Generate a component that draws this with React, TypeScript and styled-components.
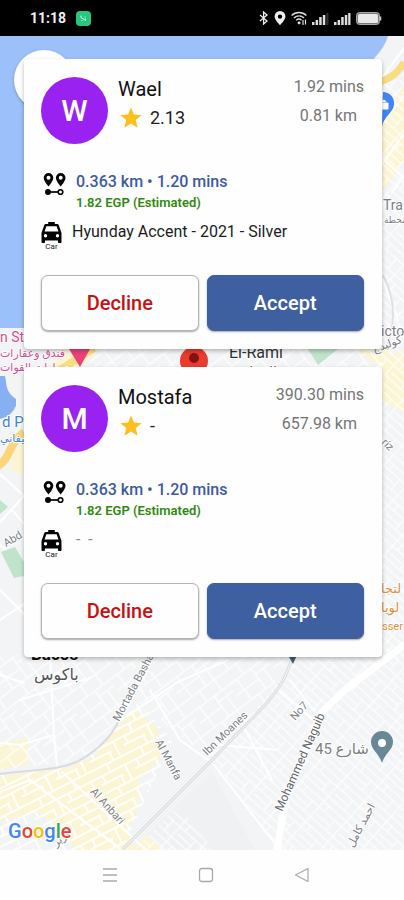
import React from "react";
import styled, { createGlobalStyle } from "styled-components";

const GlobalStyle = createGlobalStyle`
  *, *::before, *::after { box-sizing: border-box; }
  body { margin: 0; background: #fefefe; font-family: Roboto, "Noto Sans", "DejaVu Sans", sans-serif; }
  button { font: inherit; margin: 0; padding: 0; border: 0; background: none; cursor: pointer; }
  h2, p { margin: 0; font: inherit; }
`;

const Screen = styled.div`
  display: flex;
  flex-direction: column;
  min-height: 100vh;
`;

const StatusBar = styled.header`
  display: flex;
  align-items: center;
  height: 36px;
  padding: 0 22px 0 30px;
  background: #000;
  color: #f2f2f2;
`;

const Clock = styled.time`
  font-size: 14px;
  line-height: 20px;
  font-weight: 700;
`;

const AppBadge = styled.span`
  display: flex;
  margin-left: 10px;
`;

const StatusIcons = styled.div`
  display: flex;
  align-items: center;
  gap: 5px;
  margin-left: auto;
`;

const MapArea = styled.main`
  position: relative;
  flex: 1;
  padding: 23px 22px 24px 24px;
  overflow: hidden;
  background: #f2f4f5;
`;

const MapDrawing = styled.svg`
  position: absolute;
  inset: 0;
  width: 100%;
  height: 100%;
`;

const MenuButton = styled.button`
  position: absolute;
  top: 14px;
  left: 14px;
  width: 60px;
  height: 60px;
  border-radius: 50%;
  background: #fff;
  box-shadow: 0 1px 3px rgba(0, 0, 0, 0.25);
`;

const OfferList = styled.div`
  position: relative;
  display: flex;
  flex-direction: column;
  gap: 18px;
`;

const Card = styled.article`
  padding: 18px 18px 18px 17px;
  border-radius: 4px;
  background: #fefefe;
  box-shadow: 0 2px 4px rgba(0, 0, 0, 0.28);
`;

const CardHeader = styled.div`
  display: flex;
  align-items: flex-start;
  gap: 10px;
`;

const Avatar = styled.div`
  display: flex;
  align-items: center;
  justify-content: center;
  flex: none;
  width: 67px;
  height: 67px;
  border-radius: 50%;
  background: #9a22f0;
  color: #fff;
  font-size: 30px;
  font-weight: 500;
`;

const Driver = styled.div`
  display: flex;
  flex-direction: column;
  gap: 5px;
  flex: 1;
`;

const DriverName = styled.h2`
  font-size: 20px;
  line-height: 24px;
  color: #111;
`;

const Rating = styled.div`
  display: flex;
  align-items: center;
  gap: 8px;
  padding-left: 2px;
  font-size: 18px;
  line-height: 24px;
  color: #222;
`;

const Reach = styled.div`
  display: flex;
  flex-direction: column;
  align-items: flex-end;
  gap: 9px;
  font-size: 16px;
  line-height: 20px;
  color: #757575;
`;

const Distance = styled.p`
  padding-right: 7px;
`;

const Trip = styled.div`
  display: flex;
  gap: 9px;
  margin-top: 27px;
  padding-left: 2px;
`;

const TripText = styled.div`
  line-height: 21px;
  font-weight: 500;
`;

const TripLength = styled.p`
  font-size: 16px;
  color: #3c5ba0;
`;

const TripPrice = styled.p`
  font-size: 13px;
  font-weight: 600;
  color: #2f8a0a;
`;

const Vehicle = styled.div`
  display: flex;
  gap: 10px;
  margin-top: 9px;
`;

const VehicleKind = styled.div`
  display: flex;
  flex-direction: column;
  align-items: center;
  width: 21px;
  height: 29px;
  font-size: 8px;
  line-height: 8px;
  color: #222;
`;

const VehicleName = styled.p<{ $unknown: boolean }>`
  padding-left: ${(p) => (p.$unknown ? "4px" : "0")};
  font-size: 16px;
  line-height: 20px;
  color: ${(p) => (p.$unknown ? "#8a8a8a" : "#1c1c1c")};
`;

const Actions = styled.div`
  display: grid;
  grid-template-columns: 1fr 1fr;
  gap: 8px;
  margin-top: 24px;
`;

const ActionButton = styled.button<{ $primary?: boolean }>`
  height: 56px;
  border: 1px solid ${(p) => (p.$primary ? "#3f60a0" : "#b4b4b4")};
  border-radius: 7px;
  background: ${(p) => (p.$primary ? "#3f60a0" : "#fefefe")};
  box-shadow: 0 1px 2px rgba(0, 0, 0, 0.35);
  color: ${(p) => (p.$primary ? "#fff" : "#c51212")};
  font-size: 20px;
  font-weight: 500;
`;

const NavBar = styled.nav`
  display: flex;
  align-items: center;
  justify-content: center;
  gap: 72px;
  height: 50px;
  padding-left: 8px;
  background: #fefefe;
`;

const NavButton = styled.button`
  display: flex;
  align-items: center;
  justify-content: center;
  width: 24px;
  height: 24px;
`;

function PhoneIcons() {
  return (
    <StatusIcons>
      <svg width="10" height="14" viewBox="0 0 10 14" fill="none" stroke="#eee" strokeWidth="1.3">
        <path d="M1 4l7 6-3.4 3V1L8 4l-7 6" />
      </svg>
      <svg width="12" height="14" viewBox="0 0 12 14">
        <path d="M6 0a5.4 5.4 0 0 0-5.4 5.4C.6 9 6 14 6 14s5.4-5 5.4-8.6A5.4 5.4 0 0 0 6 0zm0 3.400a2.200 2.200 0 1 1 0 4.400 2.200 2.200 0 0 1 0-4.400z" fill="#eee" fillRule="evenodd" />
      </svg>
      <svg width="16" height="14" viewBox="0 0 16 14" fill="none" stroke="#ddd" strokeWidth="1.400">
        <path d="M.6 4.500a10.500 10.500 0 0 1 14.800 0M3 7a7 7 0 0 1 10 0M5.300 9.300a3.800 3.800 0 0 1 5.200 0" />
        <path d="M8 10l2 2-2 1.600L6.200 12z" fill="#ddd" stroke="none" />
        <path d="M12 9v5M14.500 8.500v5" strokeWidth="1.200" />
      </svg>
      <svg width="17" height="13" viewBox="0 0 17 13" fill="#ddd">
        <path d="M0 10h2.500v3H0zM3.600 8h2.500v5H3.600zM7.200 5h2.500v8H7.200zM10.800 3h2.500v10h-2.500z" />
        <path d="M14.400 1h2v12h-2z" fill="#333" />
      </svg>
      <svg width="17" height="13" viewBox="0 0 17 13" fill="#ddd">
        <path d="M0 10h2.500v3H0zM3.600 8h2.500v5H3.600zM7.200 5h2.500v8H7.200zM10.800 3h2.500v10h-2.500zM14.200 1h2.300v12h-2.300z" />
      </svg>
      <svg width="26" height="13" viewBox="0 0 26 13">
        <rect x=".5" y=".5" width="23" height="12" rx="3" fill="#777" stroke="#aaa" />
        <rect x="2" y="2" width="20" height="9" rx="1.500" fill="#e8e8e8" />
        <path d="M24.500 4.500v4" stroke="#ccc" strokeWidth="1.500" />
      </svg>
    </StatusIcons>
  );
}

function StarIcon() {
  return (
    <svg width="22" height="22" viewBox="0 0 24 24">
      <path fill="#fcc01a" d="M12 .5l3.200 7.700 8.400.7-6.400 5.400 2 8.200L12 18.100l-7.200 4.400 2-8.200L.4 8.900l8.400-.7z" />
    </svg>
  );
}

function RouteIcon() {
  return (
    <svg width="24" height="25" viewBox="0 0 24 25">
      <path
        fill="#050505"
        fillRule="evenodd"
        d="M5.500 2A4.800 4.800 0 0 0 .7 6.800C.7 10.300 5.500 15.500 5.500 15.500s4.800-5.200 4.800-8.700A4.800 4.800 0 0 0 5.500 2zm0 2.700a2 2 0 1 1 0 4 2 2 0 0 1 0-4zM17.700 2a4.800 4.800 0 0 0-4.800 4.800c0 3.500 4.800 8.700 4.800 8.700s4.800-5.200 4.800-8.700A4.800 4.800 0 0 0 17.700 2zm0 2.700a2 2 0 1 1 0 4 2 2 0 0 1 0-4z"
      />
      <path d="M5 21h10.500" stroke="#050505" strokeWidth="1.700" />
      <circle cx="5" cy="21" r="3" fill="#050505" />
      <circle cx="17.500" cy="21" r="2.300" fill="#fefefe" stroke="#050505" strokeWidth="1.600" />
    </svg>
  );
}

function TaxiIcon() {
  return (
    <svg width="21" height="21" viewBox="0 0 21 21">
      <path
        fill="#050505"
        fillRule="evenodd"
        d="M7.200 0h6.600v2H16c.9 0 1.500.5 1.800 1.300L20.500 11v9c0 .6-.4 1-1 1H18c-.6 0-1-.4-1-1v-1.500H4V20c0 .6-.4 1-1 1H1.500c-.6 0-1-.4-1-1v-9l2.700-7.700C3.500 2.500 4.100 2 5 2h2.200zM5.400 4.200L3.500 9.500h14l-1.900-5.300zM4.500 12a1.700 1.700 0 1 0 0 3.400 1.700 1.700 0 0 0 0-3.400zm12 0a1.700 1.700 0 1 0 0 3.400 1.700 1.700 0 0 0 0-3.400z"
      />
    </svg>
  );
}

function StreetMap() {
  return (
    <MapDrawing viewBox="0 36 404 814" preserveAspectRatio="xMidYMin slice" aria-label="Map">
      <defs>
        <pattern id="blocks" width="46" height="38" patternUnits="userSpaceOnUse" patternTransform="rotate(-37)">
          <path d="M0 1h46M0 14h28M0 26h46M28 8h18M10 1v25M28 1v25M19 26v12M38 8v30" stroke="#fff" strokeOpacity=".8" strokeWidth="1.600" fill="none" />
        </pattern>
        <pattern id="narrow" width="30" height="27" patternUnits="userSpaceOnUse" patternTransform="rotate(42)">
          <path d="M0 1h30M0 8h30M0 15h18M0 21h30M4 0v8M18 8v13M27 0v27" stroke="#fff" strokeOpacity=".75" strokeWidth="1.500" fill="none" />
        </pattern>
        <pattern id="yellowBlocks" width="38" height="26" patternUnits="userSpaceOnUse" patternTransform="rotate(-27)">
          <path d="M0 1h38M0 10h38M0 18h24M14 1v9M30 10v16M5 10v8M22 18v8" stroke="#fff" strokeOpacity=".9" strokeWidth="2" fill="none" />
        </pattern>
      </defs>

      <rect y="36" width="404" height="814" fill="#f2f4f5" />
      <path d="M212 772L255 850H130z" fill="#eff1f3" />

      <g fill="#fcf5d4">
        <path d="M382 118l22-32v75l-22 32zM382 360l22-10v62l-22-10z" />
        <path d="M0 743l28-5v26l-28 6zM70 768l25-12 20-26 20-21 23 20 2 30-22 22v30l-12 20 12 23H80l-38-42-42 8v-44z" />
        <path d="M136 845l10-10 18 15h-28z" />
        <path d="M12 454l12-12v34l-14-7zM60 349h40l-20 19H50zM355 349h35l14 22-30-8z" />
      </g>

      <rect x="380" y="80" width="24" height="580" fill="url(#narrow)" />
      <rect x="90" y="345" width="292" height="26" fill="url(#blocks)" />
      <path d="M0 655h140l-22 65-35 40-83 10z" fill="url(#blocks)" />
      <path d="M0 775l80-12 60-62 32 40-50 109H0z" fill="url(#yellowBlocks)" />
      <path d="M150 655h140l-30 55-50 50-75-60z" fill="url(#blocks)" />
      <path d="M300 655h104v195H280l-66-88 64-80z" fill="url(#narrow)" />
      <path d="M135 850l40-42 22 16 14 26z" fill="url(#narrow)" />

      <g fill="none" stroke="#fff" strokeLinecap="round">
        <path d="M404 645l-59 45-23 22-36 84-9 54" strokeWidth="7" />
        <path d="M382 78l22-30M382 124l22-28M382 164l22-30M382 206l22-30M382 158l22 20M383 280l15 40" strokeWidth="2" />
        <path d="M0 474l24 22M0 522l24-26M12 510l14 16M0 620l24-16M0 590l24 24M0 545l24 18" strokeWidth="2" />
        <path d="M50 655l4 80-34 10-20-2M20 700l70-22M54 735l3 32M0 675l24 8" strokeWidth="2" />
        <path d="M118 722l60-40 50-22M150 690l30 50 28 20M0 792l30-12 92 70M62 772l84 78" strokeWidth="2" />
        <path d="M214 765l66 85M218 745l60 5M240 720l32 60M290 680l24 30M278 690l40 34" strokeWidth="2" />
      </g>

      <g fill="none">
        <path d="M0 774c40-5 64-4 82-15 20-12 30-24 36-37" stroke="#d9dbe1" strokeWidth="2" />
        <path d="M118 722l36-67" stroke="#fff" strokeWidth="4" />
        <path d="M122 850l88-88 55-57c14-16 22-28 28-50" stroke="#dadcdf" strokeWidth="3" />
        <path d="M122 850l88-88 55-57c14-16 22-28 28-50" stroke="#f8f8f8" strokeWidth="1" />
        <path d="M383 275c10 20 14 40 5 68" stroke="#dfe2e5" strokeWidth="2" />
      </g>

      <path d="M0 36h388c-4 13-11 18-18 28L60 300l-34 28H0z" fill="#9cc0f9" />
      <path d="M0 376h5c2 8 0 16 11 23v7c-3 5-5 10-16 13z" fill="#86b0f3" />
      <path d="M404 62c-6 12-14 16-26 21" fill="none" stroke="#f7dc82" strokeWidth="7" />
      <path d="M-2 466c12-6 10-22 26-34" fill="none" stroke="#fbd57a" strokeWidth="8" />
      <path d="M60 370l34-22" fill="none" stroke="#fbdc83" strokeWidth="8" />
      <path d="M0 500l8 7-8 7zM1 552l14-5 9 15v14l-10 2zM308 349h30l-20 16z" fill="#bfe3cb" />

      <path d="M383 92a11 11 0 0 1 11 12c0 8-9 11-12 22z" fill="#4285f4" />
      <path d="M382 103h6v6h-6zM382 102q2-4 4 0" fill="#fff" stroke="#fff" />
      <path d="M69 349h21l-10 18z" fill="#e9437c" />
      <circle cx="194" cy="361" r="14" fill="#ea3b2e" />
      <circle cx="194" cy="358" r="5" fill="#811411" />
      <path d="M288 655h9l-4 9z" fill="#465f6b" />
      <path d="M382 731a11 11 0 0 0-11 11c0 8 8 11 11 21 3-10 11-13 11-21a11 11 0 0 0-11-11z" fill="#698797" />
      <circle cx="382" cy="743" r="4" fill="#fff" />

      <g fontFamily="Roboto, 'DejaVu Sans', sans-serif" fill="#7c8084" stroke="#fff" strokeWidth="2" strokeLinejoin="round" paintOrder="stroke">
        <g fontSize="14">
          <text x="383" y="210">Tra</text>
          <text x="381" y="336">icto</text>
          <text x="229" y="358" fontSize="16" fill="#333">El-Rami</text>
          <text x="243" y="377" fill="#555">الرمل</text>
          <text x="31" y="660" fontSize="17" fontWeight="700" fill="#111">Bacos</text>
          <text x="34" y="680" fontSize="16" direction="ltr" fill="#555">باكوس</text>
          <text x="315" y="754" fontSize="15" direction="ltr">شارع 45</text>
        </g>
        <g fontSize="11">
          <text x="384" y="223" fontSize="9">محطة</text>
          <text x="374" y="353" transform="rotate(-20 374 353)">كوليدج</text>
          <text x="6" y="547" transform="rotate(-30 6 547)">Abd</text>
          <text x="381" y="443" transform="rotate(45 381 443)">riz</text>
          <text x="119" y="722" transform="rotate(-62 119 722)">Mortada Basha</text>
          <text x="155" y="742" transform="rotate(62 155 742)">Al Manfa</text>
          <text x="90" y="792" transform="rotate(48 90 792)">Al Anbari</text>
          <text x="207" y="756" transform="rotate(-44 207 756)">Ibn Moanes</text>
          <text x="295" y="721" transform="rotate(-48 295 721)">No7</text>
          <text x="282" y="812" fontSize="12" fill="#62666a" transform="rotate(-66 282 812)">Mohammed Naguib</text>
          <text x="353" y="848" direction="ltr" transform="rotate(-62 353 848)">احمد كامل</text>
          <text x="56" y="847" direction="ltr" transform="rotate(-40 56 847)">عزيز</text>
        </g>
        <g fill="#dc4a91">
          <text x="0" y="342" fontSize="14">n St</text>
          <text x="0" y="357" fontSize="11" direction="ltr">فندق وعقارات</text>
          <text x="0" y="371" fontSize="11" direction="ltr">سيارات القوات</text>
        </g>
        <g fill="#4583cf">
          <text x="2" y="427" fontSize="15">d P</text>
          <text x="0" y="442" fontSize="11" direction="ltr">تيفاني</text>
        </g>
        <g fill="#df913e" fontSize="13">
          <text x="381" y="593" direction="ltr">لتجا</text>
          <text x="381" y="612" direction="ltr">لويا</text>
          <text x="382" y="630" fontSize="11">sser</text>
        </g>
        <text x="8" y="838" fontSize="20" fontWeight="500">
          <tspan fill="#4285f4">G</tspan>
          <tspan fill="#ea4335">o</tspan>
          <tspan fill="#fbbc05">o</tspan>
          <tspan fill="#4285f4">g</tspan>
          <tspan fill="#34a853">l</tspan>
          <tspan fill="#ea4335">e</tspan>
        </text>
      </g>
    </MapDrawing>
  );
}

type Offer = {
  name: string;
  rating: string;
  time: string;
  distance: string;
  vehicle?: string;
};

const offers: Offer[] = [
  { name: "Wael", rating: "2.13", time: "1.92 mins", distance: "0.81 km", vehicle: "Hyunday Accent - 2021 - Silver" },
  { name: "Mostafa", rating: "-", time: "390.30 mins", distance: "657.98 km" },
];

function OfferCard({ offer }: { offer: Offer }) {
  return (
    <Card>
      <CardHeader>
        <Avatar>{offer.name[0]}</Avatar>
        <Driver>
          <DriverName>{offer.name}</DriverName>
          <Rating>
            <StarIcon />
            {offer.rating}
          </Rating>
        </Driver>
        <Reach>
          <p>{offer.time}</p>
          <Distance>{offer.distance}</Distance>
        </Reach>
      </CardHeader>
      <Trip>
        <RouteIcon />
        <TripText>
          <TripLength>0.363 km • 1.20 mins</TripLength>
          <TripPrice>1.82 EGP (Estimated)</TripPrice>
        </TripText>
      </Trip>
      <Vehicle>
        <VehicleKind>
          <TaxiIcon />
          Car
        </VehicleKind>
        <VehicleName $unknown={!offer.vehicle}>{offer.vehicle ?? "-\u00a0\u00a0-"}</VehicleName>
      </Vehicle>
      <Actions>
        <ActionButton type="button">Decline</ActionButton>
        <ActionButton type="button" $primary>Accept</ActionButton>
      </Actions>
    </Card>
  );
}

export default function App() {
  return (
    <>
      <GlobalStyle />
      <Screen>
        <StatusBar>
          <Clock>11:18</Clock>
          <AppBadge>
            <svg width="15" height="15" viewBox="0 0 15 15">
              <rect width="15" height="15" rx="4" fill="#25c87c" />
              <path d="M5 4.500v2l4.500 3V7.500M9 5.500v1M6 9v1" stroke="#d5ffe9" fill="none" />
            </svg>
          </AppBadge>
          <PhoneIcons />
        </StatusBar>
        <MapArea>
          <StreetMap />
          <MenuButton type="button" aria-label="Menu" />
          <OfferList>
            {offers.map((offer) => (
              <OfferCard key={offer.name} offer={offer} />
            ))}
          </OfferList>
        </MapArea>
        <NavBar>
          <NavButton type="button" aria-label="Recent apps">
            <svg width="16" height="16" viewBox="0 0 16 16" stroke="#a9a9a9" strokeWidth="1.300">
              <path d="M1 2h14M1 8h14M1 14h14" />
            </svg>
          </NavButton>
          <NavButton type="button" aria-label="Home">
            <svg width="16" height="16" viewBox="0 0 16 16" fill="none" stroke="#a9a9a9" strokeWidth="1.300">
              <rect x="1.500" y="1.500" width="13" height="13" rx="2.500" />
            </svg>
          </NavButton>
          <NavButton type="button" aria-label="Back">
            <svg width="16" height="16" viewBox="0 0 16 16" fill="none" stroke="#a9a9a9" strokeWidth="1.200" strokeLinejoin="round">
              <path d="M1.500 8L14 1.500v13z" />
            </svg>
          </NavButton>
        </NavBar>
      </Screen>
    </>
  );
}
